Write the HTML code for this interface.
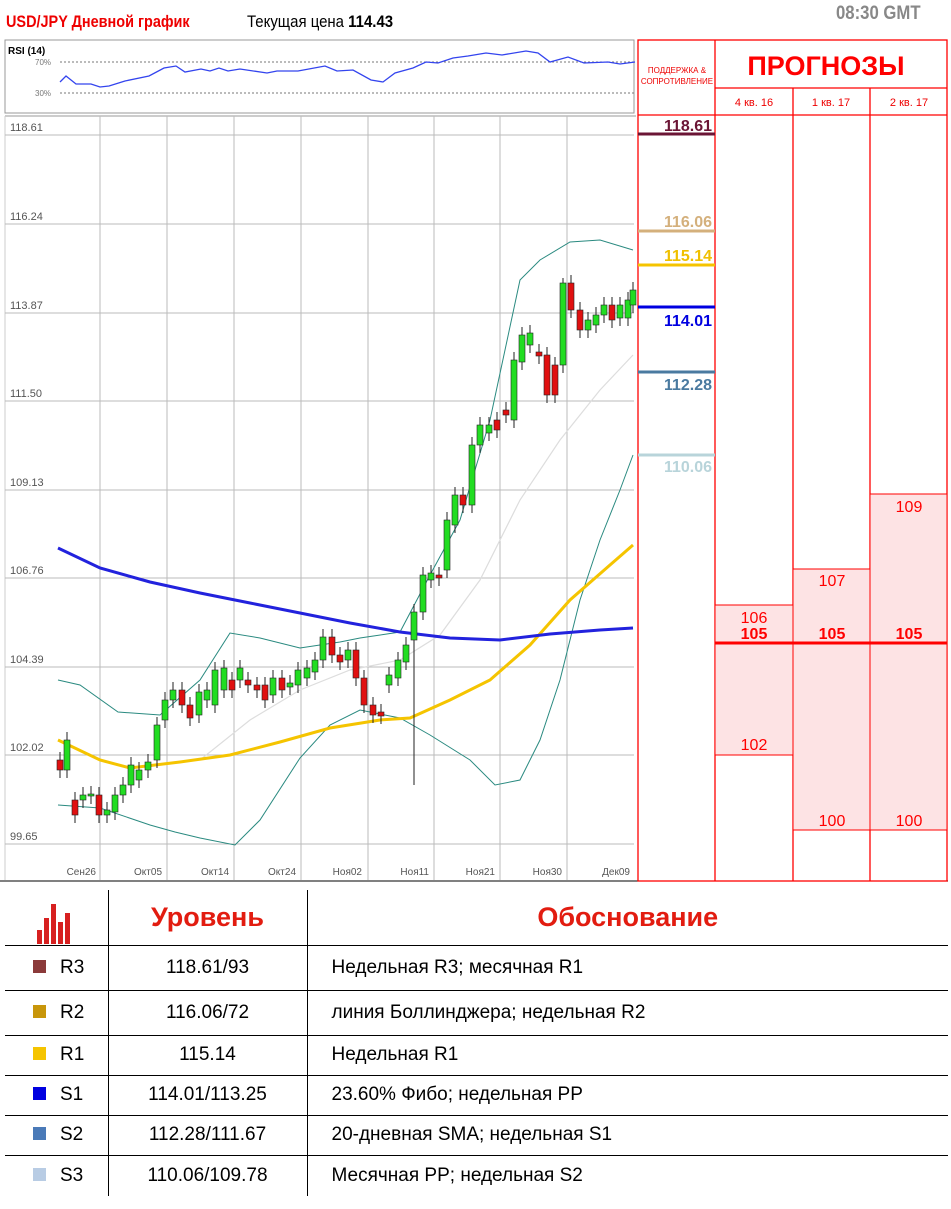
<!DOCTYPE html>
<html><head><meta charset="utf-8"><style>
*{margin:0;padding:0;box-sizing:border-box}
body{width:951px;height:1209px;background:#fff;position:relative;overflow:hidden;font-family:"Liberation Sans","DejaVu Sans",sans-serif}
.a{position:absolute}
.fc{position:absolute;color:#f00;font-size:16px;text-align:center;width:77px}
.tbl{position:absolute;left:5px;top:890px;width:943px;border-collapse:collapse}
.tbl td{border-left:1px solid #000;border-bottom:1px solid #000;font-size:19px;color:#000}
.tbl td:first-child{border-left:none}
</style></head><body>
<div class="a" style="left:6px;top:12px;font-size:17px;font-weight:bold;color:#e00;transform:scaleX(.85);transform-origin:left">USD/JPY Дневной график</div>
<div class="a" style="left:247px;top:12px;font-size:17px;color:#000;transform:scaleX(.88);transform-origin:left">Текущая цена <b>114.43</b></div>
<div class="a" style="left:836px;top:3px;font-size:19px;font-weight:bold;color:#888;transform:scaleX(.88);transform-origin:left">08:30 GMT</div>

<svg class="a" style="left:0;top:0" width="951" height="885">
<rect x="5" y="40" width="629" height="73" fill="none" stroke="#999"/>
<text x="8" y="54" font-size="10" font-weight="bold" font-family="Liberation Sans">RSI (14)</text>
<line x1="60" y1="62" x2="634" y2="62" stroke="#777" stroke-dasharray="2,2"/>
<line x1="60" y1="93" x2="634" y2="93" stroke="#777" stroke-dasharray="2,2"/>
<text x="35" y="65" font-size="8" fill="#777">70%</text>
<text x="35" y="96" font-size="8" fill="#777">30%</text>
<polyline fill="none" stroke="#3344ee" stroke-width="1.3" points="60,82 66,76 76,84 91,84 100,87 109,86 125,81 149,76 164,68 176,66 185,72 201,69 210,71 219,68 228,71 240,69 267,73 277,71 298,71 325,66 337,71 353,70 371,80 383,82 395,73 413,68 426,62 438,63 453,58 468,56 486,53 502,55 526,51 538,53 550,62 568,57 584,63 608,62 620,64 635,62"/>
<line x1="5" y1="116" x2="636" y2="116" stroke="#999"/>
<line x1="5" y1="116" x2="5" y2="880" stroke="#ccc"/>
<g stroke="#bbb" stroke-width="1" id="grid"></g>
<g font-size="11" fill="#555" font-family="Liberation Sans" id="lab"></g>
<g id="ind"></g>
<g id="cand"></g>
<line x1="0" y1="881" x2="948" y2="881" stroke="#000"/>
<!-- right panel -->
<g stroke="#f00" stroke-width="1.3" fill="none">
<rect x="638" y="40" width="309" height="841"/>
<line x1="715" y1="40" x2="715" y2="881"/>
<line x1="715" y1="88" x2="947" y2="88"/>
<line x1="638" y1="115" x2="947" y2="115"/>
<line x1="793" y1="88" x2="793" y2="881"/>
<line x1="870" y1="88" x2="870" y2="881"/>
</g>
<rect x="715" y="605" width="78" height="150" fill="#fde3e4" stroke="#f00"/>
<rect x="793" y="569" width="77" height="261" fill="#fde3e4" stroke="#f00"/>
<rect x="870" y="494" width="77" height="336" fill="#fde3e4" stroke="#f00"/>
<line x1="715" y1="643" x2="947" y2="643" stroke="#f00" stroke-width="3"/>
<g font-family="Liberation Sans" font-size="8" fill="#e00" text-anchor="middle"><text x="677" y="73">ПОДДЕРЖКА &amp;</text><text x="677" y="84">СОПРОТИВЛЕНИЕ</text></g>
<text x="826" y="75" font-family="Liberation Sans" font-size="27" font-weight="bold" fill="#f00" text-anchor="middle">ПРОГНОЗЫ</text>
<g font-family="Liberation Sans" font-size="11" fill="#e00" text-anchor="middle"><text x="754" y="106">4 кв. 16</text><text x="831" y="106">1 кв. 17</text><text x="909" y="106">2 кв. 17</text></g>
<g font-family="Liberation Sans" font-size="16" font-weight="bold" text-anchor="end">
<line x1="638" y1="134" x2="715" y2="134" stroke="#6b1535" stroke-width="3"/><text x="712" y="131" fill="#6b1535">118.61</text>
<line x1="638" y1="231" x2="715" y2="231" stroke="#d4b07c" stroke-width="3"/><text x="712" y="227" fill="#d4b07c">116.06</text>
<line x1="638" y1="265" x2="715" y2="265" stroke="#f5c400" stroke-width="3"/><text x="712" y="261" fill="#f0c000">115.14</text>
<line x1="638" y1="307" x2="715" y2="307" stroke="#0000e0" stroke-width="3"/><text x="712" y="326" fill="#0000e0">114.01</text>
<line x1="638" y1="372" x2="715" y2="372" stroke="#4a7aa0" stroke-width="3"/><text x="712" y="390" fill="#4a7aa0">112.28</text>
<line x1="638" y1="455" x2="715" y2="455" stroke="#b8d4da" stroke-width="3"/><text x="712" y="472" fill="#b8d4da">110.06</text>
</g>
<g font-family="Liberation Sans" font-size="16" fill="#f00" text-anchor="middle">
<text x="754" y="623">106</text><text x="754" y="639" font-weight="bold">105</text><text x="754" y="750">102</text>
<text x="832" y="586">107</text><text x="832" y="639" font-weight="bold">105</text><text x="832" y="826">100</text>
<text x="909" y="512">109</text><text x="909" y="639" font-weight="bold">105</text><text x="909" y="826">100</text>
</g>
</svg>

<table class="tbl">
<tr style="height:55px"><td style="width:103px;border-bottom:1px solid #000;position:relative">
<svg width="40" height="40" style="position:absolute;left:32px;top:14px"><g fill="#d72020"><rect x="0" y="26" width="5" height="14"/><rect x="7" y="14" width="5" height="26"/><rect x="14" y="0" width="5" height="40"/><rect x="21" y="18" width="5" height="22"/><rect x="28" y="9" width="5" height="31"/></g></svg></td>
<td style="width:199px;text-align:center;font-size:27px;font-weight:bold;color:#e21c10">Уровень</td>
<td style="text-align:center;font-size:27px;font-weight:bold;color:#e21c10">Обоснование</td></tr>
<tr style="height:45px"><td><span style="display:inline-block;width:13px;height:13px;background:#8b3a3a;margin:0 14px 0 28px"></span>R3</td><td style="text-align:center">118.61/93</td><td style="padding-left:24px">Недельная R3; месячная R1</td></tr>
<tr style="height:45px"><td><span style="display:inline-block;width:13px;height:13px;background:#c8960a;margin:0 14px 0 28px"></span>R2</td><td style="text-align:center">116.06/72</td><td style="padding-left:24px">линия Боллинджера; недельная R2</td></tr>
<tr style="height:40px"><td><span style="display:inline-block;width:13px;height:13px;background:#f5c400;margin:0 14px 0 28px"></span>R1</td><td style="text-align:center">115.14</td><td style="padding-left:24px">Недельная R1</td></tr>
<tr style="height:40px"><td><span style="display:inline-block;width:13px;height:13px;background:#0000e0;margin:0 14px 0 28px"></span>S1</td><td style="text-align:center">114.01/113.25</td><td style="padding-left:24px">23.60% Фибо; недельная PP</td></tr>
<tr style="height:40px"><td><span style="display:inline-block;width:13px;height:13px;background:#4a7ab8;margin:0 14px 0 28px"></span>S2</td><td style="text-align:center">112.28/111.67</td><td style="padding-left:24px">20-дневная SMA; недельная S1</td></tr>
<tr style="height:41px"><td style="border-bottom:none"><span style="display:inline-block;width:13px;height:13px;background:#b8cce4;margin:0 14px 0 28px"></span>S3</td><td style="text-align:center;border-bottom:none">110.06/109.78</td><td style="padding-left:24px;border-bottom:none">Месячная PP; недельная S2</td></tr>
</table>

<script>
var NS="http://www.w3.org/2000/svg";
function el(p,t,a){var e=document.createElementNS(NS,t);for(var k in a)e.setAttribute(k,a[k]);document.getElementById(p).appendChild(e);return e;}
var hs=[135,224,313,401,490,578,667,755,844],hl=["118.61","116.24","113.87","111.50","109.13","106.76","104.39","102.02","99.65"];
hs.forEach(function(y,i){el("grid","line",{x1:5,y1:y,x2:634,y2:y});var t=el("lab","text",{x:10,y:y-4});t.textContent=hl[i];});
var vx=[100,167,234,301,368,434,500,567],vl=["Сен26","Окт05","Окт14","Окт24","Ноя02","Ноя11","Ноя21","Ноя30","Дек09"];
vx.forEach(function(x){el("grid","line",{x1:x,y1:116,x2:x,y2:880});});
[96,162,229,296,362,429,495,562,630].forEach(function(x,i){var t=el("lab","text",{x:x,y:875,"text-anchor":"end","font-size":"10"});t.textContent=vl[i];});
function pl(pts,c,w){el("ind","polyline",{points:pts,fill:"none",stroke:c,"stroke-width":w});}
pl("200,760 250,720 300,690 350,670 400,660 440,635 480,580 520,500 560,440 600,390 633,355","#ddd",1.2);
pl("58,680 80,685 118,712 160,715 200,680 230,633 260,638 300,648 340,642 360,638 400,632 430,575 460,520 490,420 520,280 540,260 570,242 600,240 633,250","#2a8a80",1);
pl("58,805 100,808 150,825 175,832 200,838 235,845 260,820 300,758 330,725 360,710 400,718 430,735 470,760 495,785 520,780 540,740 560,680 580,600 600,540 620,490 633,455","#2a8a80",1);
pl("58,740 100,760 130,768 180,762 230,755 280,742 330,728 380,720 410,718 450,700 490,680 530,645 570,600 610,565 633,545","#f5c400",3);
pl("58,548 100,568 150,582 200,593 250,603 300,613 350,623 400,632 450,638 500,640 550,634 600,630 633,628","#2222dd",3);
var c=[[60,760,770,0],[67,770,740,1],[75,800,815,0],[83,800,795,1],[91,796,794,1],[99,795,815,0],[107,815,810,1],[115,812,795,1],[123,795,785,1],[131,785,765,1],[139,780,770,1],[148,770,762,1],[157,760,725,1],[165,720,700,1],[173,700,690,1],[182,690,705,0],[190,705,718,0],[199,715,692,1],[207,700,690,1],[215,705,670,1],[224,690,668,1],[232,680,690,0],[240,680,668,1],[248,680,685,0],[257,685,690,0],[265,685,700,0],[273,695,678,1],[282,678,690,0],[290,687,683,1],[298,685,670,1],[307,678,668,1],[315,672,660,1],[323,660,637,1],[332,637,655,0],[340,655,662,0],[348,660,650,1],[356,650,678,0],[364,678,705,0],[373,705,715,0],[381,712,716,0],[389,685,675,1],[398,678,660,1],[406,662,645,1],[414,640,612,1],[423,612,575,1],[431,580,573,1],[439,575,578,0],[447,570,520,1],[455,525,495,1],[463,495,505,0],[472,505,445,1],[480,445,425,1],[489,433,425,1],[497,420,430,0],[506,410,415,0],[514,420,360,1],[522,362,335,1],[530,345,333,1],[539,352,356,0],[547,355,395,0],[555,365,395,0],[563,365,283,1],[571,283,310,0],[580,310,330,0],[588,330,320,1],[596,325,315,1],[604,315,305,1],[612,305,320,0],[620,318,305,1],[628,318,300,1],[633,305,290,1]];
c.forEach(function(d){var t=Math.min(d[1],d[2]),b=Math.max(d[1],d[2]);var lo=b+8,hi=t-8;if(d[0]==414)lo=785;if(d[0]==563)hi=278;
el("cand","line",{x1:d[0],y1:hi,x2:d[0],y2:lo,stroke:"#222","stroke-width":1});
el("cand","rect",{x:d[0]-3,y:t,width:6,height:Math.max(2,b-t),fill:d[3]?"#22dd22":"#e01010",stroke:"#222","stroke-width":.6});});
</script>
</body></html>
